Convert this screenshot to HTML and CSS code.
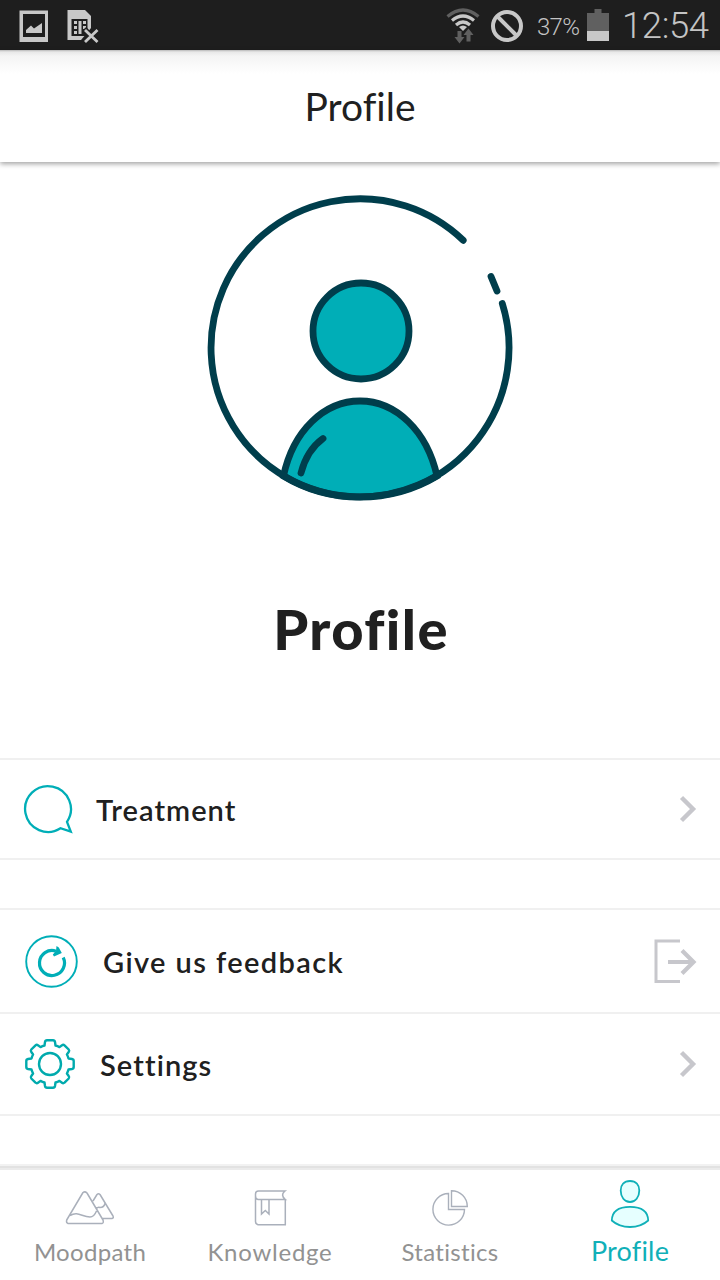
FILE: index.html
```html
<!DOCTYPE html>
<html lang="en">
<head>
<meta charset="utf-8">
<title>Profile</title>
<link rel="stylesheet" href="styles.css">
</head>
<body>
<div class="screen">
  <div class="status">
    <svg class="status-left" width="110" height="50" viewBox="0 0 110 50">
      <path fill="#c8c8c8" fill-rule="evenodd" d="M19.500 10.500H48V42H19.500zM23 14V37H45V14z"/>
      <path fill="#c8c8c8" d="M26 33V30L31 25.500L34 28.500L42 23V33z"/>
      <path fill="#c8c8c8" d="M67.500 10H85L91 16V28L87 33L81 40H67.500z"/>
      <path fill="#1e1e1e" d="M71.500 19H87.500V36H71.500z"/>
      <path fill="#c8c8c8" d="M74 21h3v3h-3zM74 26h3v3h-3zM74 31h3v3h-3zM78.500 21h3v13h-3zM83 21h3v3h-3zM83 26h3v3h-3z"/>
      <path stroke="#1e1e1e" stroke-width="6" d="M84 29L98 43M98 29L84 43"/>
      <path stroke="#c8c8c8" stroke-width="2.800" d="M85 30L97.500 42M97.500 30L85 42"/>
    </svg>
    <div class="status-right">
      <svg width="36" height="50" viewBox="445 0 36 50" fill="none">
        <path stroke="#606060" stroke-width="3.200" d="M447.500 16.500Q463 3.500 478.500 16.500"/>
        <path stroke="#c8c8c8" stroke-width="3.200" d="M452 20.500Q463 11.500 474 20.500M456 25Q463 19 470 25"/>
        <path fill="#c8c8c8" d="M459 27Q463 24 467 27L463 31z"/>
        <path fill="#606060" d="M457.500 31h4v6h3l-5 6.500-5-6.500h3zM466.500 41.500h4v-6.500h3l-5-6.500-5 6.500h3z"/>
      </svg>
      <svg class="block-icon" width="34" height="34" viewBox="0 0 34 34" fill="none" stroke="#c8c8c8" stroke-width="4">
        <circle cx="17" cy="17" r="14"/><path d="M7 7L27 27"/>
      </svg>
      <span class="percent">37%</span>
      <svg class="battery" width="22" height="32" viewBox="0 0 22 32">
        <path fill="#606060" d="M7.500 0h7v4H22v28H0V4h7.500z"/><path fill="#c8c8c8" d="M0 22h22v10H0z"/>
      </svg>
      <span class="clock">12:54</span>
    </div>
  </div>

  <header class="header"><h1 class="header-title">Profile</h1></header>

  <section class="hero">
    <svg class="avatar" width="320" height="325" viewBox="200 185 320 325" fill="none" stroke="#003e4c" stroke-width="6.800" stroke-linecap="round">
      <path fill="#00aeb7" d="M283.500 476C293 431 324 401 360 401C396 401 427 431 437 476Q402 497 360 497Q318 497 283.500 476z"/>
      <circle cx="361" cy="331" r="48" fill="#00aeb7"/>
      <path d="M463.200 240.300A149 149 0 1 0 502.300 303.500M491 276.500L497 291M301 473Q307 450 323 438.500"/>
    </svg>
    <h2 class="hero-title">Profile</h2>
  </section>

  <main class="lists">
    <div class="group">
      <div class="row row-treatment">
        <svg width="50" height="50" viewBox="23 784 50 50" fill="none" stroke="#00aeb7" stroke-width="2.300">
          <path d="M60.500 828.200A22.900 22.900 0 1 1 67 821.800L70.800 831.700z"/>
        </svg>
        <span class="label treatment">Treatment</span>
        <svg class="end" width="18" height="28" viewBox="0 0 18 28" fill="none" stroke="#c7c7cc" stroke-width="4.400"><path d="M2.500 2.500L14 14L2.500 25.500"/></svg>
      </div>
    </div>
    <div class="group">
      <div class="row row-feedback">
        <svg width="54" height="54" viewBox="25 934 54 54" fill="none" stroke="#00aeb7">
          <circle cx="51.500" cy="961.500" r="25.300" stroke-width="1.900"/>
          <path stroke-width="3.200" d="M56 951.200A12.500 12.500 0 1 0 63.200 957.500"/>
          <path fill="#00aeb7" stroke="none" d="M56.500 946L58.800 947.500L61.800 953L54 956.500L52.800 954.500L56 951z"/>
        </svg>
        <span class="label feedback">Give us feedback</span>
        <svg class="end" width="44" height="46" viewBox="0 0 44 46" fill="none" stroke="#c7c7cc">
          <path stroke-width="3" d="M27 3H3V43.500H27"/>
          <path stroke-width="4.200" d="M15 24H40M29 12.500L40.500 24L29 35.500"/>
        </svg>
      </div>
      <div class="row row-settings">
        <svg width="52" height="52" viewBox="-26 -26 52 52" fill="none" stroke="#00aaad" stroke-width="2.400" stroke-linejoin="round">
          <circle r="11"/>
          <path d="M-5.500 -18.500L-5 -22Q-4.700 -23.700 -3 -23.700H3Q4.700 -23.700 5 -22L5.500 -18.500Q7.500 -18 9.500 -16.900L12 -18.700Q13.300 -19.700 14.500 -18.700L18.700 -14.500Q19.700 -13.300 18.700 -12L16.900 -9.500Q18 -7.500 18.500 -5.500L22 -5Q23.700 -4.700 23.700 -3V3Q23.700 4.700 22 5L18.500 5.500Q18 7.500 16.900 9.500L18.700 12Q19.700 13.300 18.700 14.500L14.500 18.700Q13.300 19.700 12 18.700L9.500 16.900Q7.500 18 5.500 18.500L5 22Q4.700 23.700 3 23.700H-3Q-4.700 23.700 -5 22L-5.500 18.500Q-7.500 18 -9.500 16.900L-12 18.700Q-13.300 19.700 -14.500 18.700L-18.700 14.500Q-19.700 13.300 -18.700 12L-16.900 9.500Q-18 7.500 -18.500 5.500L-22 5Q-23.700 4.700 -23.700 3V-3Q-23.700 -4.700 -22 -5L-18.500 -5.500Q-18 -7.500 -16.900 -9.500L-18.700 -12Q-19.700 -13.300 -18.700 -14.500L-14.500 -18.700Q-13.300 -19.700 -12 -18.700L-9.500 -16.900Q-7.500 -18 -5.500 -18.500z"/>
        </svg>
        <span class="label settings">Settings</span>
        <svg class="end" width="18" height="28" viewBox="0 0 18 28" fill="none" stroke="#c7c7cc" stroke-width="4.400"><path d="M2.500 2.500L14 14L2.500 25.500"/></svg>
      </div>
    </div>
  </main>

  <nav class="tabs">
    <div class="tab">
      <svg width="52" height="52" viewBox="64 1180 52 52" fill="none" stroke="#aab0bb" stroke-width="1.500" stroke-linejoin="round">
        <path d="M83 1192.500Q85 1191 87 1193L103 1220Q104 1223 102 1223.500H68Q66 1223 66.700 1220zM70 1215.500C78 1211 82 1217 90 1217Q94 1217 96.500 1211M93 1201L97 1194.500Q98.500 1193 100 1194.500L113 1216Q114 1218 112 1218.500H102.500M96.500 1208.500Q98 1206.500 100 1207.500Q104 1207.500 105 1203.500"/>
      </svg>
      <span class="tab-label moodpath">Moodpath</span>
    </div>
    <div class="tab">
      <svg width="52" height="52" viewBox="244 1180 52 52" fill="none" stroke="#aab0bb" stroke-width="1.500">
        <path d="M285.300 1199V1224.700H258Q255.500 1224 255.500 1221.500V1194Q255.500 1191 258.500 1191H285Q280 1195 285.300 1199.500H258Q255.500 1199 255.500 1196M261.500 1200V1214L265.300 1210.500L269 1214V1200"/>
      </svg>
      <span class="tab-label knowledge">Knowledge</span>
    </div>
    <div class="tab">
      <svg width="52" height="52" viewBox="424 1180 52 52" fill="none" stroke="#aab0bb" stroke-width="1.400">
        <path d="M448.500 1193.500A15.800 15.800 0 1 0 464.500 1209.500H448.500zM451.500 1190.700V1206.500H467.300A15.800 15.800 0 0 0 451.500 1190.700z"/>
      </svg>
      <span class="tab-label statistics">Statistics</span>
    </div>
    <div class="tab">
      <svg width="52" height="52" viewBox="604 1180 52 52" fill="#e6ffff" stroke="#10b0b8" stroke-width="1.800">
        <path d="M630 1181C636 1181 639.300 1185 639.300 1190.500C639.300 1197 635.500 1202 630 1202C624.500 1202 620.700 1197 620.700 1190.500C620.700 1185 624 1181 630 1181zM630 1206.800C642 1206.800 648 1211.500 648.200 1220.500Q641 1227 630 1227Q619 1227 611.800 1220.500C612 1211.500 618 1206.800 630 1206.800z"/>
      </svg>
      <span class="tab-label active">Profile</span>
    </div>
  </nav>
</div>
</body>
</html>
```

FILE: styles.css
```css
* { box-sizing: border-box; }
body { margin: 0; background: #fff; color: #202020; font-family: Lato, "Open Sans", sans-serif; font-variant-ligatures: none; }
svg { display: block; flex: none; }
.screen { width: 720px; height: 1280px; display: flex; flex-direction: column; overflow: hidden; }
h1, h2 { margin: 0; }
.status { height: 50px; flex: none; background: #1e1e1e; display: flex; justify-content: space-between; font-family: Roboto, sans-serif; color: #c4c4c4; }
.status-right { display: flex; align-items: center; padding-right: 10px; }
.block-icon { margin: 2px 13px 0 9px; }
.percent { width: 44px; font-size: 24px; font-weight: 350; letter-spacing: -0.7px; padding-top: 4px; margin-right: 6px; white-space: nowrap; }
.battery { margin-right: 13px; }
.clock { width: 88px; font-size: 36.5px; font-weight: 350; letter-spacing: -0.4px; white-space: nowrap; }
.header { height: 112px; flex: none; display: flex; justify-content: center; align-items: center; background: linear-gradient(#b8b8b8 0, #e8e8e8 2px, #f4f4f4 6px, #fff 24px); box-shadow: 0 2px 5px rgba(0,0,0,.36); }
.header-title { font-size: 39px; font-weight: 400; line-height: 48px; white-space: nowrap; }
.hero { height: 596px; flex: none; padding-top: 23px; display: flex; flex-direction: column; align-items: center; }
.hero-title { font-size: 56px; line-height: 68px; font-weight: 900; letter-spacing: 1.4px; margin-top: 85px; padding-left: 2px; }
.lists { display: flex; flex-direction: column; gap: 48px; }
.group { border-top: 2px solid #f0f0f0; }
.row { display: flex; align-items: center; border-bottom: 2px solid #f0f0f0; padding-right: 23px; padding-left: 23px; }
.row-treatment { height: 100px; }
.row-feedback { height: 104px; padding-left: 25px; }
.row-settings { height: 102px; padding-left: 24px; }
.label { font-size: 29px; line-height: 36px; font-weight: 600; padding-top: 1px; white-space: nowrap; }
.treatment { margin-left: 23px; letter-spacing: 1.05px; }
.feedback { margin-left: 24px; letter-spacing: 1.4px; }
.settings { margin-left: 24px; letter-spacing: 1.1px; }
.end { margin-left: auto; }
.tabs { height: 116px; margin-top: auto; flex: none; display: grid; grid-template-columns: repeat(4, 180px); padding-top: 6px; background: linear-gradient(#f2f2f2 0 2px, #e2e2e2 2px 4px, #ebebeb 4px 6px, #fff 6px); }
.tab { display: flex; flex-direction: column; align-items: center; padding-top: 10px; }
.tab-label { font-size: 24px; line-height: 30px; margin-top: 5px; color: #929292; white-space: nowrap; letter-spacing: .3px; }
.knowledge { letter-spacing: .75px; }
.tab-label.active { font-size: 27px; color: #10b0b8; margin-top: 4px; letter-spacing: .2px; }
```
